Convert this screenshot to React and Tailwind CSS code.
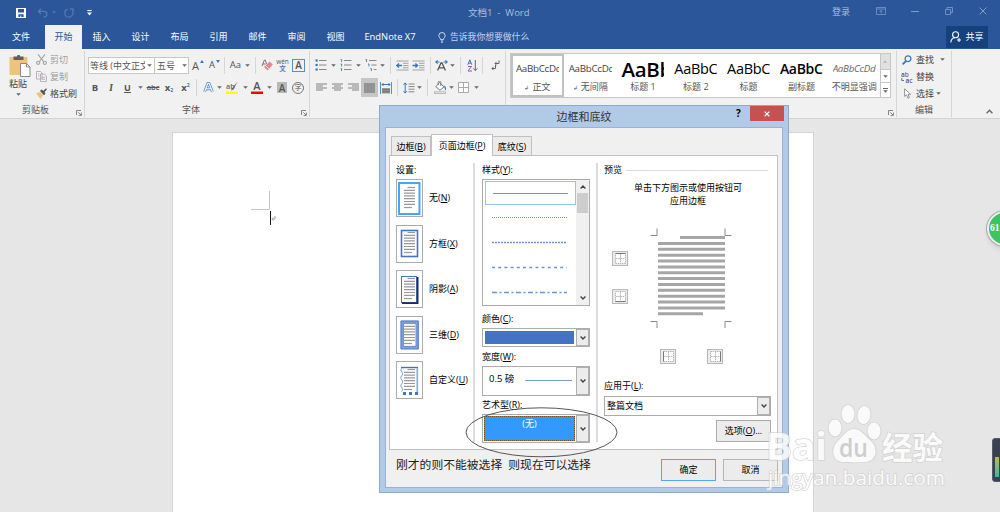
import clsx from "clsx";

const tabs = ["插入", "设计", "布局", "引用", "邮件", "审阅", "视图"];

const styles = [
  { sample: "AaBbCcDd", name: "正文", mark: true, text: "text-[9.8px]", active: true },
  { sample: "AaBbCcDd", name: "无间隔", mark: true, text: "text-[9.8px]" },
  { sample: "AaBbC", name: "标题 1", text: "text-[20.5px] font-semibold text-black" },
  { sample: "AaBbCc", name: "标题 2", text: "text-[14.5px] text-black" },
  { sample: "AaBbCc", name: "标题", text: "text-[14.5px] text-black" },
  { sample: "AaBbCc", name: "副标题", text: "text-[14px] font-semibold text-black" },
  { sample: "AaBbCcDd", name: "不明显强调", text: "text-[9.8px] italic text-[#666]" },
];

const settings = [
  { label: "无", k: "N", kind: "none" },
  { label: "方框", k: "X", kind: "box" },
  { label: "阴影", k: "A", kind: "shadow" },
  { label: "三维", k: "D", kind: "three" },
  { label: "自定义", k: "U", kind: "custom" },
];

const Caret = () => (
  <svg width="5" height="3" viewBox="0 0 5 3" className="shrink-0">
    <path d="M0.2 0.2h4.6L2.5 2.8z" fill="#666" />
  </svg>
);

const Cell = ({ className, children }) => (
  <div className={clsx("flex h-[19px] shrink-0 items-center justify-center", className)}>
    {children}
  </div>
);

const Sep = () => <div className="h-[17px] w-px bg-[#d5d5d5]" />;

const Key = ({ label, k, end = "" }) => (
  <span>
    {label}(<span className="underline underline-offset-1">{k}</span>){end}
  </span>
);

const Launcher = () => (
  <svg width="6" height="6" viewBox="0 0 6 6" fill="none" stroke="#777" strokeWidth="0.9">
    <path d="M0.5 5V0.5H5M2.3 2.3L5 5M5.4 2.6v2.8H2.6" />
  </svg>
);

const Group = ({ className, label, launcher, children }) => (
  <div className={clsx("relative flex h-[66px] shrink-0 flex-col border-r border-[#d6d6d6]", className)}>
    <div className="h-[52px]">{children}</div>
    <div className="flex h-[14px] items-center justify-center leading-[14px] text-[#555]">
      {label}
    </div>
    {launcher && (
      <div className="absolute right-[2px] bottom-[1px]">
        <Launcher />
      </div>
    )}
  </div>
);

// Lines of text in the alignment buttons, as x offset / width pairs
const Lines = ({ rows, stroke = "#777" }) => (
  <svg width="12" height="10" viewBox="0 0 12 10" stroke={stroke}>
    {rows.map(([x, w], i) => (
      <path key={i} d={`M${x} ${i * 2 + 1}h${w}`} strokeWidth="0.9" />
    ))}
  </svg>
);

const TitleBar = () => (
  <div className="flex h-[25px] items-center text-[#a9bfdf]">
    <div className="flex w-[100px] items-center pl-4">
      <svg width="10" height="10" viewBox="0 0 10 10">
        <path d="M0 0h10v10H0z" fill="#fff" />
        <path d="M2 1h6v3.4H2zM2.4 6.3h5.2V9H5.3V7.6H4.2V9H2.4z" fill="#2b579a" />
      </svg>
      <svg width="11" height="10" viewBox="0 0 11 10" className="ml-[11px]" fill="none" stroke="#5277b3" strokeWidth="1.3">
        <path d="M4 0.8L1.2 3.4L4 6M1.5 3.4h5c4.5 0 4.5 5 .2 5.8" />
      </svg>
      <svg width="4" height="3" viewBox="0 0 5 3" className="ml-[4px]">
        <path d="M0 0h5L2.5 3z" fill="#5277b3" />
      </svg>
      <svg width="10" height="10" viewBox="0 0 10 10" className="ml-[8px]" fill="none" stroke="#5277b3" strokeWidth="1.3">
        <path d="M6 1h3v3M8.6 1.2C9.8 4.5 8.6 9 5 9.2C0 9.2 -0.6 2.6 3.6 1.2" />
      </svg>
      <svg width="5" height="6" viewBox="0 0 5 6" className="ml-[13px]">
        <path d="M0.3 0.6h4.4" stroke="#fff" />
        <path d="M0 2.5h5L2.5 5.5z" fill="#fff" />
      </svg>
    </div>
    <div className="flex-1 pl-[368px] text-[9.5px] leading-[20px] whitespace-pre">文档1  -  Word</div>
    <div className="w-[44px] pb-[3px] text-[9px]">登录</div>
    <svg width="10" height="8" viewBox="0 0 10 8" className="mb-[3px]" fill="none" stroke="#6f90c4">
      <path d="M0.5 0.5h9v7h-9zM0.5 2h9M5 6.5V3.5M3.5 4.8L5 3.4l1.5 1.4" strokeWidth="0.9" />
    </svg>
    <div className="mb-[2px] ml-[25px] h-px w-[8px] bg-[#7f9dcc]" />
    <svg width="8" height="8" viewBox="0 0 8 8" className="mb-[3px] ml-[26px]" fill="none" stroke="#6f90c4">
      <path d="M0.5 2.5h5v5h-5zM2 2.3V0.5h5.5v5H5.7" />
    </svg>
    <svg width="8" height="8" viewBox="0 0 8 8" className="mr-[13px] mb-[3px] ml-[26px]" stroke="#7f9dcc">
      <path d="M0.5 0.5l7 7M7.5 0.5l-7 7" />
    </svg>
  </div>
);

const TabRow = () => (
  <div className="flex h-6 items-stretch pb-0 text-white">
    <div className="flex w-[45px] items-center justify-center pr-[3px] pb-[2px]">文件</div>
    <div className="flex w-[37px] items-center justify-center bg-[#f1f1f1] pb-[2px] text-[#2b579a]">开始</div>
    {tabs.map((t) => (
      <div key={t} className="flex w-[39px] items-center justify-center pb-[2px]">
        {t}
      </div>
    ))}
    <div className="flex w-[70px] items-center justify-center pb-px text-[9.4px]">EndNote X7</div>
    <div className="flex flex-1 items-center pl-[13px] text-[#c3d2e9]">
      <svg width="8" height="11" viewBox="0 0 8 11" fill="none" stroke="#dbe5f3" strokeWidth="0.9" className="mr-[4px]">
        <path d="M2.6 7.6C2.6 6 0.8 5.6 0.8 3.7a3.2 3.2 0 0 1 6.4 0C7.2 5.6 5.4 6 5.4 7.6zM2.8 9h2.4M3.2 10.4h1.6" />
      </svg>
      <span className="text-[8.8px]">告诉我你想要做什么</span>
    </div>
    <div className="mt-px mr-[12px] flex h-[22px] w-[42px] items-center justify-center gap-[4px] bg-[#15417c] pb-px">
      <svg width="11" height="12" viewBox="0 0 11 12" fill="none" stroke="#fff" strokeWidth="1.1">
        <circle cx="5.6" cy="3.8" r="3" />
        <path d="M0.8 11.5C1 8.6 2.5 7 5 6.8M7 9h4M9 7v4" />
      </svg>
      <span>共享</span>
    </div>
  </div>
);

const Clipboard = () => (
  <Group className="w-[85px]" label={<span className="pr-[13px]">剪贴板</span>} launcher>
    <div className="flex">
      <div className="flex w-[36px] flex-col items-center pt-[4px]">
        <svg width="22" height="22" viewBox="0 0 22 22" className="ml-[3px]">
          <path d="M0.5 2h18v18h-18z" fill="#ecc47c" />
          <path d="M4.5 1.5H8a1.6 1.6 0 0 1 3.2 0h3.3V5h-10z" fill="#606060" />
          <path d="M11.5 8.5h6l3.5 3.5v9.5h-9.5z" fill="#fff" stroke="#888" />
          <path d="M17.5 8.5V12H21" fill="none" stroke="#888" />
        </svg>
        <span className="mt-[1px] h-[12px] leading-[12px]">粘贴</span>
        <div className="mt-[3px]">
          <Caret />
        </div>
      </div>
      <div className="flex flex-col">
        <div className="flex h-[17px] items-center gap-[3px] text-[#a0a0a0]">
          <svg width="11" height="11" viewBox="0 0 11 11" fill="none" stroke="#a3a3a3" strokeWidth="1.1">
            <path d="M2 0.3l5.5 7.2M9 0.3L3.5 7.5" />
            <circle cx="2.2" cy="8.8" r="1.6" />
            <circle cx="8.8" cy="8.8" r="1.6" />
          </svg>
          剪切
        </div>
        <div className="flex h-[17px] items-center gap-[3px] text-[#a0a0a0]">
          <svg width="11" height="11" viewBox="0 0 11 11" fill="#f6f2f6" stroke="#b1a9b3" strokeWidth="0.9">
            <path d="M0.5 0.5h4l1.5 1.5v6H0.5zM4.5 3h4L10.4 5v5.5H4.5z" />
            <path d="M2 3h1.5M2 5h1.5M6 6.3h3M6 8.3h3" />
          </svg>
          复制
        </div>
        <div className="flex h-[17px] items-center gap-[3px] text-[#444]">
          <svg width="11" height="11" viewBox="0 0 11 11">
            <path d="M0 5.5L4 4l3.2 3.2L4.5 11z" fill="#ecc47c" />
            <path d="M4 3l1.5-1.5 2 1.3L10 0.2l1 1L8.6 4l.8 1.8L8 7.2z" fill="#555" />
          </svg>
          格式刷
        </div>
      </div>
    </div>
  </Group>
);

const FontGroup = () => (
  <Group className="w-[225px]" label={<span className="pr-[12px]">字体</span>} launcher>
    <div className="flex flex-col gap-[4px] pt-px pl-[3px] text-[#555]">
      <div className="flex h-[19px] items-center pt-[7px]">
        <div className="flex h-[17px] w-[67px] shrink-0 items-center border border-[#c6c6c6] bg-white pl-px">
          <span className="w-[55px] overflow-hidden text-[9px] leading-[15px] whitespace-nowrap">等线 (中文正文)</span>
          <span className="ml-[2px]"><Caret /></span>
        </div>
        <div className="flex h-[17px] w-[34px] shrink-0 items-center border border-l-0 border-[#c6c6c6] bg-white pl-[2px] text-[9px]">
          五号
          <span className="ml-[7px]"><Caret /></span>
        </div>
        <Cell className="w-[18px] gap-px text-[11px]">
          A
          <svg width="4" height="3" viewBox="0 0 4 3" className="-mt-[8px]"><path d="M0 3L2 0L4 3z" fill="#3b78b8" /></svg>
        </Cell>
        <Cell className="w-[15px] gap-px text-[9.5px]">
          A
          <svg width="4" height="3" viewBox="0 0 4 3" className="-mt-[8px]"><path d="M0 0L2 3L4 0z" fill="#3b78b8" /></svg>
        </Cell>
        <Cell className="w-[5px]"><Sep /></Cell>
        <Cell className="w-[17px] text-[9.5px]">Aa</Cell>
        <Cell className="w-[6px]"><Caret /></Cell>
        <Cell className="w-[10px]"><Sep /></Cell>
        <Cell className="w-[14px]">
          <svg width="12" height="12" viewBox="0 0 12 12">
            <path d="M1 7L3.4 1h.8l1.4 3.800M1.8 5h3" fill="none" stroke="#777" />
            <path d="M8.6 2.4L11.8 5.4L6.6 11.4L3 8z" fill="#e8848e" />
            <path d="M4.4 6.6l3.5 3.2" stroke="#fff" strokeWidth="0.7" />
          </svg>
        </Cell>
        <Cell className="w-[17px] flex-col text-[6px]">
          <span className="h-[6px] text-[6.5px] leading-[5px]">wén</span>
          <span className="h-[7px] text-[6.5px] leading-[7px] font-bold text-[#3b78b8]">文</span>
        </Cell>
        <Cell className="w-[15px]">
          <span className="flex h-[13px] w-[13px] items-center justify-center border border-[#5b8cc4] text-[10px] font-semibold">A</span>
        </Cell>
      </div>
      <div className="flex h-[19px] items-center pt-[6px]">
        <Cell className="w-[14px] text-[9.5px] font-bold">B</Cell>
        <Cell className="w-[18px] font-serif text-[10px] font-bold italic">I</Cell>
        <Cell className="w-[15px] text-[9px] font-bold underline">U</Cell>
        <Cell className="w-[10px]"><Caret /></Cell>
        <Cell className="w-[16px] text-[7.5px] font-semibold line-through">abc</Cell>
        <Cell className="w-[16px] text-[9.5px] font-bold">x<span className="mt-[6px] text-[5px] text-[#3b78b8]">2</span></Cell>
        <Cell className="w-[17px] text-[9.5px] font-bold">x<span className="-mt-[5px] text-[5px] text-[#3b78b8]">2</span></Cell>
        <Cell className="w-[5px]"><Sep /></Cell>
        <Cell className="w-[18px]">
          <svg width="11" height="11" viewBox="0 0 11 11" fill="none" strokeLinejoin="round">
            <path d="M1.6 9.8L4.900 1.3h1.2L9.4 9.8M3.2 6.8h4.6" stroke="#5c93cf" strokeWidth="2.8" />
            <path d="M1.6 9.8L4.9 1.3h1.2L9.4 9.8M3.2 6.8h4.6" stroke="#f4f8fc" strokeWidth="1.1" />
          </svg>
        </Cell>
        <Cell className="w-[4px]"><Caret /></Cell>
        <Cell className="w-[22px]">
          <svg width="12" height="13" viewBox="0 0 12 13">
            <path d="M0 10.5h12v2.5H0z" fill="#ffff00" />
            <path d="M11.5 0.5L6 7.5L5 9.5L7.5 8.5z" fill="#666" />
            <text x="0" y="7.5" fontSize="7.2" fontWeight="600" fill="#666">ab</text>
          </svg>
        </Cell>
        <Cell className="w-[4px]"><Caret /></Cell>
        <Cell className="w-[20px]">
          <svg width="12" height="13" viewBox="0 0 12 13">
            <path d="M0 10.5h12v2.5H0z" fill="#ff0000" />
            <text x="2.2" y="8.8" fontSize="11" fontWeight="600" fill="#555">A</text>
          </svg>
        </Cell>
        <Cell className="w-[5px]"><Caret /></Cell>
        <Cell className="w-[20px]">
          <span className="flex h-[11px] w-[10px] items-center justify-center bg-[#b8b8b8] text-[10px] font-semibold">A</span>
        </Cell>
        <Cell className="w-[12px]">
          <span className="flex h-[12px] w-[12px] items-center justify-center rounded-full border border-[#777] text-[7px]">字</span>
        </Cell>
      </div>
    </div>
  </Group>
);

const ListIcon = ({ kind }) => (
  <svg width="12" height="12" viewBox="0 0 12 12">
    {[1.5, 6, 10.5].map((y, i) => {
      const x = kind === "multi" ? i * 2.4 : 0;
      return (
        <g key={y}>
          {kind === "bullet" ? (
            <rect x="0.5" y={y - 1.1} width="2.2" height="2.2" fill="#3b78b8" />
          ) : (
            <path d={`M${x + 0.6} ${y - 1}h1v2.5`} fill="none" stroke="#3b78b8" strokeWidth="0.9" />
          )}
          <path d={`M${x + 4} ${y}H11.5`} stroke="#888" />
        </g>
      );
    })}
  </svg>
);

const Indent = ({ right }) => (
  <svg width="13" height="11" viewBox="0 0 13 11">
    <path d="M0.5 1h12M7 3.3h5.5M7 5.6h5.5M7 7.8h5.5M0.5 10h12" stroke="#999" strokeWidth="0.9" />
    <path d={right ? "M0.5 5.5h5M3.4 3.4l2.2 2.1l-2.2 2.1" : "M6 5.5H1M3 3.4L0.8 5.5L3 7.6"} fill="none" stroke="#3b78b8" strokeWidth="1.4" />
  </svg>
);

const Paragraph = () => (
  <Group className="w-[196px]">
    <div className="flex flex-col gap-[4px] pt-px pl-[2px]">
      <div className="flex h-[19px] items-center pt-[7px]">
        <Cell className="w-[18px]"><ListIcon kind="bullet" /></Cell>
        <Cell className="w-[7px]"><Caret /></Cell>
        <Cell className="w-[18px]"><ListIcon kind="number" /></Cell>
        <Cell className="w-[7px]"><Caret /></Cell>
        <Cell className="w-[18px]"><ListIcon kind="multi" /></Cell>
        <Cell className="w-[5px]"><Caret /></Cell>
        <Cell className="w-[10px]"><Sep /></Cell>
        <Cell className="w-[14px]"><Indent /></Cell>
        <Cell className="w-[18px]"><Indent right /></Cell>
        <Cell className="w-[6px]"><Sep /></Cell>
        <Cell className="w-[17px]">
          <svg width="13" height="11" viewBox="0 0 13 11" fill="none">
            <path d="M2.6 10.5L6 3h1l3.4 7.5M3.8 7.8h5.4" stroke="#555" strokeWidth="1.3" />
            <path d="M4.5 2H1M2.6 0.4L0.8 2l1.8 1.6M8.5 2H12M10.4 0.4L12.2 2l-1.8 1.6" stroke="#3b78b8" strokeWidth="1.1" />
          </svg>
        </Cell>
        <Cell className="w-[5px]"><Caret /></Cell>
        <Cell className="w-[11px]"><Sep /></Cell>
        <Cell className="w-[12px]">
          <svg width="11" height="13" viewBox="0 0 11 13" fill="none">
            <path d="M0.8 5.8L2.8 0.8l2 5M1.5 4.2h2.6" stroke="#3b78b8" />
            <path d="M1 7.5h3.6L1 12h4" stroke="#a14fb5" />
            <path d="M8.3 1v10.5M6.3 9.4l2 2.2l2-2.2" stroke="#666" />
          </svg>
        </Cell>
        <Cell className="w-[9px]"><Sep /></Cell>
        <Cell className="w-[16px]">
          <svg width="9" height="11" viewBox="0 0 9 11" fill="none" stroke="#666">
            <path d="M8 0.5v3H4M5.6 1.8L4 3.5l1.6 1.8M4.5 5v3.5H1M2.5 6.8L1 8.5l1.5 1.7" />
          </svg>
        </Cell>
      </div>
      <div className="flex h-[19px] items-center pt-[6px] pl-px">
        <Cell className="w-[17px]"><Lines rows={[[0, 11], [0, 7], [0, 11], [0, 7]]} /></Cell>
        <Cell className="w-[16px]"><Lines rows={[[0, 11], [2, 7], [0, 11], [2, 7]]} /></Cell>
        <Cell className="w-[15px]"><Lines rows={[[0, 11], [4, 7], [0, 11], [4, 7]]} /></Cell>
        <Cell className="w-[17px] bg-[#c6c6c6]"><Lines stroke="#555" rows={[[0, 11], [0, 11], [0, 11], [0, 11], [0, 11]]} /></Cell>
        <Cell className="w-[16px]">
          <svg width="12" height="12" viewBox="0 0 12 12" fill="none">
            <path d="M0.5 0v12M11.5 0v12" stroke="#5b8cc4" />
            <path d="M2 2.5h8M3.5 1L2 2.5L3.5 4M8.5 1L10 2.5L8.5 4" stroke="#3b78b8" />
            <path d="M2 6h8v5.5H2z" fill="#999" />
            <path d="M2 7.8h8M2 9.8h8" stroke="#666" strokeWidth="0.8" />
          </svg>
        </Cell>
        <Cell className="w-[6px]"><Sep /></Cell>
        <Cell className="w-[17px]">
          <svg width="12" height="12" viewBox="0 0 12 12" fill="none">
            <path d="M2.2 1v10M0.5 2.8l1.7-1.9l1.7 1.9M0.5 9.2l1.7 1.9l1.7-1.9" stroke="#3b78b8" />
            <path d="M5.5 2h6M5.5 4.6h6M5.5 7.2h6M5.5 9.8h6" stroke="#888" />
          </svg>
        </Cell>
        <Cell className="w-[4px]"><Caret /></Cell>
        <Cell className="w-[12px]"><Sep /></Cell>
        <Cell className="w-[14px]">
          <svg width="13" height="13" viewBox="0 0 13 13" fill="none">
            <path d="M5.5 1.5L10 5.8L6 9.3L1.8 5.6zM4.2 4V1.6a1.3 1.3 0 0 1 2.6 0V5" stroke="#777" fill="#fff" />
            <path d="M10 4.500c2 .8 2.4 3 1.8 5c-1-.8-1.4-2.6-1.8-5z" fill="#3b78b8" />
            <path d="M0.5 10.8h11v1.7H0.5z" stroke="#aaa" strokeWidth="0.8" />
          </svg>
        </Cell>
        <Cell className="w-[9px]"><Caret /></Cell>
        <Cell className="w-[15px]">
          <svg width="11" height="11" viewBox="0 0 11 11" fill="#fff" stroke="#aaa">
            <path d="M0.5 0.5h10v10h-10zM5.5 0.5v10M0.5 5.5h10" />
          </svg>
        </Cell>
        <Cell className="w-[10px]"><Caret /></Cell>
      </div>
    </div>
  </Group>
);

const Styles = () => (
  <Group className="w-[391px]" launcher>
    <div className="mt-[2px] ml-[4px] flex h-[45px] w-[381px] border border-[#c6c6c6] bg-white">
      {styles.map((s) => (
        <div
          key={s.name}
          className={clsx(
            "flex w-[52.8px] shrink-0 flex-col items-center border-2",
            s.active ? "border-[#c1c1c1]" : "border-transparent"
          )}
        >
          <div className={clsx("flex h-[25px] w-[43px] items-center overflow-hidden pt-px tracking-[-0.3px] whitespace-nowrap", s.text)}>
            {s.sample}
          </div>
          <div className="h-[12px] text-[9px] leading-[12px] whitespace-nowrap text-[#555]">
            {s.mark && <span className="mr-[3px] text-[6px]">↲</span>}
            {s.name}
          </div>
        </div>
      ))}
      <div className="ml-[-1px] flex w-[11px] flex-col border-l border-[#c6c6c6]">
        <div className="flex h-[15px] items-center justify-center bg-[#e1e1e1]">
          <svg width="4" height="3" viewBox="0 0 4 3"><path d="M0 3h4L2 0z" fill="#bbb" /></svg>
        </div>
        <div className="flex h-[14px] items-center justify-center border-y border-[#c6c6c6]"><Caret /></div>
        <div className="flex h-[14px] flex-col items-center justify-center gap-px">
          <div className="h-px w-[5px] bg-[#666]" />
          <Caret />
        </div>
      </div>
    </div>
  </Group>
);

const Editing = () => (
  <Group className="w-[55px]" label="编辑">
    <div className="flex flex-col pl-[5px] text-[#444]">
      <div className="flex h-[17px] items-center">
        <svg width="10" height="10" viewBox="0 0 10 10" fill="none" stroke="#3b78b8" strokeWidth="1.3" className="mr-[4px]">
          <circle cx="6" cy="3.7" r="2.9" />
          <path d="M4 6L0.6 9.4" strokeWidth="1.8" />
        </svg>
        查找
        <span className="ml-[6px]"><Caret /></span>
      </div>
      <div className="flex h-[17px] items-center">
        <svg width="13" height="12" viewBox="0 0 13 12" className="-ml-px mr-[2px]">
          <text x="0" y="5.5" fontSize="6.5" fontWeight="600" fill="#555">a<tspan fill="#a14fb5">b</tspan></text>
          <text x="4.5" y="11.5" fontSize="6.5" fontWeight="600" fill="#555">a<tspan fill="#3b78b8">c</tspan></text>
          <path d="M0.8 7v2.5H3" fill="none" stroke="#3b78b8" />
        </svg>
        替换
      </div>
      <div className="flex h-[17px] items-center">
        <svg width="8" height="11" viewBox="0 0 8 11" fill="#fff" stroke="#888" strokeWidth="0.9" className="mr-[4px] ml-[2px]">
          <path d="M0.6 0.8V8.4L2.5 6.8L4 10.2L5.4 9.5L4 6.3H6.6z" />
        </svg>
        选择
        <span className="ml-[2px]"><Caret /></span>
      </div>
    </div>
  </Group>
);

const Ribbon = () => (
  <div className="flex h-[70px] items-start border-b border-[#d2d2d2] bg-[#f1f1f1] pt-[2px]">
    <Clipboard />
    <FontGroup />
    <Paragraph />
    <Styles />
    <Editing />
    <svg width="7" height="5" viewBox="0 0 7 5" className="mt-[58px] ml-[34px]" fill="none" stroke="#666" strokeWidth="1.3">
      <path d="M0.6 4.2L3.5 1.2L6.4 4.2" />
    </svg>
  </div>
);

// Small page preview next to each border setting
const PageIcon = ({ kind }) => (
  <svg width="25" height="35" viewBox="0 0 25 35" fill="none">
    {kind === "none" && <rect x="2" y="2" width="20.5" height="31" stroke="#4aa3f5" strokeWidth="2" />}
    {kind === "box" && <rect x="4.5" y="4.5" width="16" height="26" stroke="#4472c4" strokeWidth="1.6" />}
    {kind === "shadow" && (
      <>
        <rect x="4.5" y="4.5" width="15" height="26" stroke="#4472c4" strokeWidth="1" />
        <path d="M20.6 5v26.2H5" stroke="#1f2f55" strokeWidth="1.8" />
      </>
    )}
    {kind === "three" && (
      <>
        <rect x="4.9" y="4.9" width="15.6" height="26" stroke="#7fa3de" strokeWidth="2.6" />
        <path d="M4 4h17.2v28H4zM6.4 6.4h12.6v23H6.4z" stroke="#4472c4" strokeWidth="0.8" />
      </>
    )}
    {kind === "custom" && (
      <>
        <path d="M4 4.5h17" stroke="#4472c4" strokeWidth="1.4" />
        <path d="M5 5q-2.500 2 0 4q2 2 -.5 4q-2 2 .5 4q2 2 -.5 4q-2 2 .5 4q2 2 -.5 3.500" stroke="#7fa3de" />
        <path d="M20.3 5v25" stroke="#8fb0e4" strokeWidth="1.8" />
        <path d="M6 30.5h15" stroke="#4472c4" strokeWidth="2.8" strokeDasharray="3 3" />
      </>
    )}
    <path d="M10.5 6.5h7.5" stroke="#999" strokeWidth="1.2" />
    <path d="M7 9.3h11M7 12.1h11M7 14.9h11M7 17.7h11M7 20.5h11M7 23.3h11" stroke="#999" strokeWidth="1.2" />
    <path d="M7 26.5h8" stroke="#999" strokeWidth="1.2" />
  </svg>
);

const DropButton = () => (
  <div className="flex w-[13px] shrink-0 items-center justify-center border border-[#b0b0b0] bg-[#ececec]">
    <svg width="6" height="4" viewBox="0 0 6 4" fill="none" stroke="#444" strokeWidth="1.4">
      <path d="M0.6 0.6L3 3L5.4 0.6" />
    </svg>
  </div>
);

const EdgeButton = ({ side }) => (
  <div className="flex h-[15px] w-[16px] items-center justify-center border border-[#b8b8b8] bg-[#ececec]">
    <svg width="11" height="11" viewBox="0 0 11 11" fill="#fff">
      <path d="M0.5 0.5h10v10h-10zM5.5 1v9M1 5.5h9" stroke="#b5b5b5" strokeDasharray="1.5 0.7" />
      <path d={side} stroke="#777" />
    </svg>
  </div>
);

const LineRow = ({ dash, width = 1, color = "#6d92d4" }) => (
  <svg width="75" height="3" viewBox="0 0 75 3">
    <path d="M0 1.5h75" stroke={color} strokeWidth={width} strokeDasharray={dash} />
  </svg>
);

const PagePreview = () => (
  <svg width="82" height="100" viewBox="0 0 82 100" fill="none">
    <path d="M0.5 7.5h6.5V0.5M81.5 7.5h-6.500V0.5M0.5 93.5h6.5v6.5M81.5 93.5h-6.5v6.5" stroke="#8a8a8a" />
    <path d="M30 9.5h45" stroke="#a6a6a6" strokeWidth="3" />
    {[...Array(12)].map((_, i) => (
      <path key={i} d={`M8 ${15.4 + i * 5.87}h67`} stroke="#a6a6a6" strokeWidth="3" />
    ))}
    <path d="M8 85.8h45" stroke="#a6a6a6" strokeWidth="3" />
  </svg>
);

const Dialog = () => (
  <div className="absolute top-[105px] left-[379px] flex h-[388px] w-[410px] flex-col border border-[#8ea9cd] bg-[#b0cae8] text-[9px] text-black">
    <div className="flex h-[21px] items-start">
      <div className="w-[38px]" />
      <div className="w-[332px] text-center text-[11px] leading-[21px] text-[#333]">边框和底纹</div>
      <div className="-ml-[14px] w-[14px] text-[10px] leading-[15px] font-bold">?</div>
      <div className="flex h-[15px] w-[34px] items-center justify-center bg-[#c75050]">
        <svg width="6" height="6" viewBox="0 0 6 6" stroke="#fff" strokeWidth="1.3">
          <path d="M0.6 0.6l4.8 4.8M5.4 0.6L0.6 5.4" />
        </svg>
      </div>
    </div>
    <div className="mx-[5px] flex h-[361px] flex-col border border-[#98b3d5] bg-[#f0f0f0] px-[3px] pt-[6px]">
      <div className="flex h-[21px] items-end">
        <div className="ml-[2px] flex h-[19px] w-[40px] items-center justify-center border border-b-0 border-[#c0c0c0] bg-[#ebebeb]">
          <Key label="边框" k="B" />
        </div>
        <div className="relative z-10 -mb-px flex h-[22px] w-[62px] items-center justify-center border border-b-0 border-[#c0c0c0] bg-white pb-px">
          <Key label="页面边框" k="P" />
        </div>
        <div className="flex h-[19px] w-[39px] items-center justify-center border border-b-0 border-l-0 border-[#c0c0c0] bg-[#ebebeb]">
          <Key label="底纹" k="S" />
        </div>
      </div>
      <div className="flex h-[295px] w-[389px] border border-[#c0c0c0] bg-white pt-[7px] pl-[6px] leading-[14px]">
        <div className="h-[279px] w-[79px] shrink-0 border-r-2 border-[#dcdcdc]">
          <div className="h-[16px]">设置:</div>
          <div className="flex flex-col gap-[7.5px]">
            {settings.map((s) => (
              <div key={s.k} className="flex h-[38px] items-center">
                <div className="flex h-[38px] w-[27px] items-center justify-center border border-[#ababab] bg-white">
                  <PageIcon kind={s.kind} />
                </div>
                <span className="ml-[6px] whitespace-nowrap"><Key label={s.label} k={s.k} /></span>
              </div>
            ))}
          </div>
        </div>
        <div className="h-[279px] w-[123px] shrink-0 border-r-2 border-[#dcdcdc] pl-[7px]">
          <div className="h-[16px]"><Key label="样式" k="Y" end=":" /></div>
          <div className="flex h-[127px] w-[108px] justify-between border border-[#ababab]">
            <div className="flex w-[93px] flex-col items-center">
              <div className="mt-px ml-px flex h-[24px] w-[91px] shrink-0 items-center justify-center border border-[#93c5f7]">
                <LineRow />
              </div>
              <div className="flex h-[25px] items-center"><LineRow dash="1 1" /></div>
              <div className="flex h-[25px] items-center"><LineRow dash="2 1" width={1.3} /></div>
              <div className="flex h-[25px] items-center"><LineRow dash="3 3.2" width={1.3} /></div>
              <div className="flex h-[25px] items-center"><LineRow dash="5 2.5 2 2.5" width={1.3} /></div>
            </div>
            <div className="flex w-[13px] flex-col items-center justify-between bg-[#f0f0f0] py-[5px]">
              <div className="flex flex-col items-center gap-[4px]">
                <svg width="6" height="4" viewBox="0 0 6 4" fill="none" stroke="#444" strokeWidth="1.4"><path d="M0.6 3.4L3 1L5.4 3.4" /></svg>
                <div className="h-[20px] w-[11px] bg-[#cdcdcd]" />
              </div>
              <svg width="6" height="4" viewBox="0 0 6 4" fill="none" stroke="#444" strokeWidth="1.4"><path d="M0.6 0.6L3 3L5.4 0.6" /></svg>
            </div>
          </div>
          <div className="flex h-[22px] items-center pt-[3px]"><Key label="颜色" k="C" end=":" /></div>
          <div className="flex h-[19px] w-[108px] border border-[#ababab]">
            <div className="my-[2px] mr-[2px] ml-[2px] flex-1 bg-[#4472c4]" />
            <DropButton />
          </div>
          <div className="flex h-[19px] items-center"><Key label="宽度" k="W" end=":" /></div>
          <div className="flex h-[30px] w-[108px] border border-[#ababab]">
            <div className="flex flex-1 items-center pb-[5px] pl-[6px] text-[9.5px]">0.5 磅</div>
            <div className="mt-[13px] mr-[4px] h-px w-[47px] bg-[#7d9fd9]" />
            <DropButton />
          </div>
          <div className="flex h-[18px] items-center"><Key label="艺术型" k="R" end=":" /></div>
          <div className="flex h-[29px] w-[108px] border border-[#ababab]">
            <div className="m-px flex-1 border border-dotted border-[#7a4a20] bg-[#3399ff] text-center leading-[13px] text-white">(无)</div>
            <DropButton />
          </div>
        </div>
        <div className="flex w-[175px] flex-col pl-[6px]">
          <div className="flex h-[14px] items-center gap-[4px]">
            预览
            <div className="h-px flex-1 bg-[#dcdcdc]" />
            <div className="w-px" />
          </div>
          <div className="mt-[4px] mr-px text-center leading-[13px]">
            单击下方图示或使用按钮可
            <br />
            应用边框
          </div>
          <div className="mt-[21px] flex">
            <div className="mr-[22px] ml-[8px] flex flex-col gap-[23px] pt-[23px]">
              <EdgeButton side="M0.5 0.5h10" />
              <EdgeButton side="M0.5 10.5h10" />
            </div>
            <PagePreview />
          </div>
          <div className="mt-[21px] ml-[56px] flex gap-[31px]">
            <EdgeButton side="M0.5 0.5v10" />
            <EdgeButton side="M10.5 0.5v10" />
          </div>
          <div className="mt-[15px] h-[17px]"><Key label="应用于" k="L" end=":" /></div>
          <div className="flex h-[20px] w-[167px] border border-[#ababab]">
            <div className="flex flex-1 items-center pl-[2px]">整篇文档</div>
            <DropButton />
          </div>
          <div className="mt-[4px] ml-[112px] flex h-[22px] w-[55px] items-center justify-center border border-[#ababab] bg-[#ececec] whitespace-nowrap">
            <Key label="选项" k="O" end="..." />
          </div>
        </div>
      </div>
      <div className="flex h-[36px] items-center">
        <div className="mt-[-9px] ml-[7px] w-[265px] text-[11.8px] leading-[16px] whitespace-pre text-[#222]">
          刚才的则不能被选择  则现在可以选择
        </div>
        <div className="mt-[3px] flex h-[22px] w-[55px] shrink-0 items-center justify-center border border-[#55a5f5] bg-[#ececec]">确定</div>
        <div className="mt-[3px] ml-[7px] flex h-[22px] w-[55px] shrink-0 items-center justify-center border border-[#b5b5b5] bg-[#ececec]">取消</div>
      </div>
    </div>
  </div>
);

const Watermark = () => (
  <svg
    className="absolute top-[398px] left-[762px] opacity-80"
    width="190"
    height="96"
    viewBox="0 0 190 96"
    fill="#fff"
    stroke="#cfcfcf"
    strokeWidth="1.6"
    paintOrder="stroke"
  >
    <text x="4" y="62" fontSize="38" fontWeight="700" textLength="61" lengthAdjust="spacingAndGlyphs">Bai</text>
    <ellipse cx="73" cy="30" rx="6.5" ry="8.5" />
    <ellipse cx="86" cy="16" rx="6.5" ry="9" />
    <ellipse cx="102" cy="17" rx="6.5" ry="9" transform="rotate(8 102 17)" />
    <ellipse cx="112" cy="33" rx="6.5" ry="8.5" />
    <path d="M92 31C85 31 81 38 76 43C69 49 69 63 81 64C87 64.500 97 64.500 103 64C116 63 116 50 109 43C103 38 99 31 92 31z" />
    <text x="77" y="59" fontSize="26" fontWeight="600" fill="#c9c9c9" stroke="none" textLength="29" lengthAdjust="spacingAndGlyphs">du</text>
    <text x="120" y="61" fontSize="31" fontWeight="700" textLength="61" lengthAdjust="spacingAndGlyphs">经验</text>
    <text x="6" y="87" fontSize="19.500" fontWeight="500" textLength="177" lengthAdjust="spacingAndGlyphs">jingyan.baidu.com</text>
  </svg>
);

const App = () => {
  return (
    <div className="relative flex h-[512px] w-[1000px] flex-col overflow-hidden bg-[#e6e6e6] font-['Open_Sans','Noto_Sans_CJK_SC',sans-serif] text-[9px] leading-none text-[#444]">
      <div className="h-[49px] shrink-0 bg-[#2b579a]">
        <TitleBar />
        <TabRow />
      </div>
      <Ribbon />
      <div className="mt-[13px] ml-[172px] w-[642px] flex-1 border border-b-0 border-[#d4d4d4] bg-white">
        <svg width="30" height="35" viewBox="0 0 30 35" className="mt-[58px] ml-[78px]" fill="none">
          <path d="M0 18.5h18.5V0" stroke="#c4c4c4" />
          <path d="M19.5 20v14" stroke="#111" />
          <path d="M24 25v3h-3M22.4 26.4L20.8 28l1.6 1.6" stroke="#999" strokeWidth="0.9" />
        </svg>
      </div>

      <Dialog />

      {/* Hand drawn ring round the art picker */}
      <svg className="absolute top-[406px] left-[465px]" width="154" height="53" viewBox="0 0 154 53" fill="none">
        <ellipse cx="76.5" cy="26.3" rx="75.5" ry="24.5" stroke="#555" />
      </svg>

      <Watermark />

      <div className="absolute top-[211px] left-[987px] flex h-[35px] w-[35px] items-center rounded-full border-2 border-[#eee] bg-[#3cc661] font-['Liberation_Serif'] text-[9.5px] font-bold text-white shadow-md ring-1 ring-[#aaa]">
        <span className="pl-px">61</span>
      </div>
      <div className="absolute top-[438px] left-[992px] flex h-[44px] w-[12px] flex-col rounded-[3px] border border-[#555b6b] bg-[#3c4152] pt-[18px] pl-[2px]">
        <div className="h-[20px] w-[4px] bg-linear-to-b from-[#b8b84a] to-[#2fb3a5]" />
      </div>
    </div>
  );
};

export default App;
